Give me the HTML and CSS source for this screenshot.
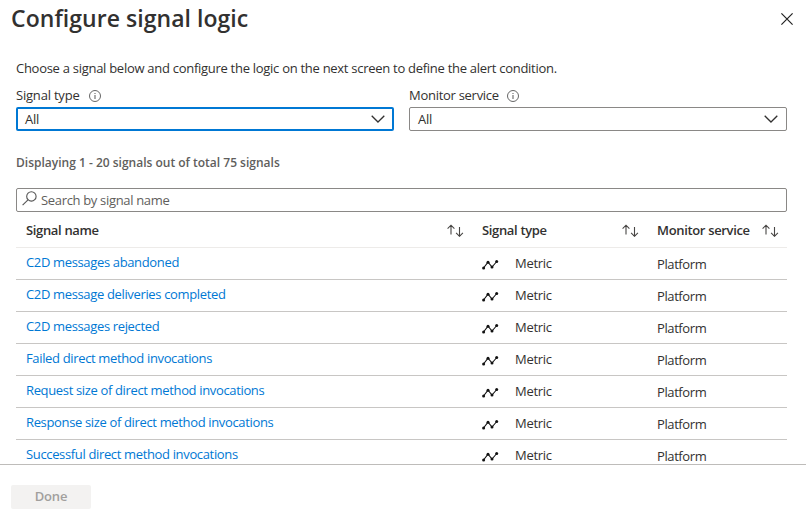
FILE: index.html
```html
<!DOCTYPE html>
<html lang="en">
<head>
<meta charset="utf-8">
<title>Configure signal logic</title>
<link rel="stylesheet" href="styles.css">
</head>
<body>
<svg class="symbols" width="0" height="0">
  <symbol id="info" viewBox="0 0 12 12"><circle cx="6" cy="6" r="5.5" fill="none" stroke="#666" stroke-width="1"/><path d="M6 5v4M6 2.9v1.2" stroke="#666" stroke-width="1.1"/></symbol>
  <symbol id="chevron" viewBox="0 0 14 8"><path d="M.7.7 7 7 13.3.7" fill="none" stroke="#323130" stroke-width="1.3"/></symbol>
  <symbol id="sort" viewBox="0 0 17 13"><path d="M4 10.5V1.2M.6 4.6 4 1.2l3.4 3.4M12.5 3v9.3M9.1 8.9l3.4 3.4 3.4-3.4" fill="none" stroke="#484644" stroke-width="1.1"/></symbol>
  <symbol id="metric" viewBox="0 0 17 11"><path d="M1.5 9 6 3.2 10 8 14.8 2.5" fill="none" stroke="#111" stroke-width="1.1"/><g fill="#111"><circle cx="1.6" cy="9" r="1.5"/><circle cx="6" cy="3.2" r="1.5"/><circle cx="10" cy="8" r="1.5"/><circle cx="14.7" cy="2.6" r="1.5"/></g></symbol>
</svg>
<main class="content">
  <header class="title-bar">
    <h1><span>Configure signal logic</span></h1>
    <svg class="close" viewBox="0 0 12 12"><path d="M.4.4 11.6 11.6M11.6.4.4 11.6" stroke="#222" stroke-width="1.2"/></svg>
  </header>
  <div class="panel">
    <p class="intro">Choose a signal below and configure the logic on the next screen to define the alert condition.</p>
    <div class="filters">
      <div class="filter">
        <div class="label"><span class="label-type">Signal type</span><svg class="info"><use href="#info"/></svg></div>
        <div class="select focused"><span>All</span><svg class="chevron"><use href="#chevron"/></svg></div>
      </div>
      <div class="filter">
        <div class="label"><span class="label-service">Monitor service</span><svg class="info"><use href="#info"/></svg></div>
        <div class="select"><span>All</span><svg class="chevron"><use href="#chevron"/></svg></div>
      </div>
    </div>
    <p class="count">Displaying 1 - 20 signals out of total 75 signals</p>
    <div class="search">
      <svg class="magnifier" viewBox="0 0 15 15"><circle cx="9.4" cy="5.4" r="4.7" fill="none" stroke="#555" stroke-width="1.1"/><path d="M6 8.8.6 14.2" stroke="#555" stroke-width="1.1"/></svg>
      <span>Search by signal name</span>
    </div>
    <div class="table">
      <div class="row head">
        <div class="cell name"><span>Signal name</span><svg class="sort"><use href="#sort"/></svg></div>
        <div class="cell type"><span>Signal type</span><svg class="sort"><use href="#sort"/></svg></div>
        <div class="cell service"><span>Monitor service</span><svg class="sort"><use href="#sort"/></svg></div>
      </div>
      <div class="row"><div class="cell name"><a>C2D messages abandoned</a></div><div class="cell type"><svg class="metric"><use href="#metric"/></svg><span>Metric</span></div><div class="cell service"><span>Platform</span></div></div>
      <div class="row"><div class="cell name"><a>C2D message deliveries completed</a></div><div class="cell type"><svg class="metric"><use href="#metric"/></svg><span>Metric</span></div><div class="cell service"><span>Platform</span></div></div>
      <div class="row"><div class="cell name"><a>C2D messages rejected</a></div><div class="cell type"><svg class="metric"><use href="#metric"/></svg><span>Metric</span></div><div class="cell service"><span>Platform</span></div></div>
      <div class="row"><div class="cell name"><a>Failed direct method invocations</a></div><div class="cell type"><svg class="metric"><use href="#metric"/></svg><span>Metric</span></div><div class="cell service"><span>Platform</span></div></div>
      <div class="row"><div class="cell name"><a>Request size of direct method invocations</a></div><div class="cell type"><svg class="metric"><use href="#metric"/></svg><span>Metric</span></div><div class="cell service"><span>Platform</span></div></div>
      <div class="row"><div class="cell name"><a>Response size of direct method invocations</a></div><div class="cell type"><svg class="metric"><use href="#metric"/></svg><span>Metric</span></div><div class="cell service"><span>Platform</span></div></div>
      <div class="row"><div class="cell name"><a>Successful direct method invocations</a></div><div class="cell type"><svg class="metric"><use href="#metric"/></svg><span>Metric</span></div><div class="cell service"><span>Platform</span></div></div>
    </div>
  </div>
</main>
<footer class="footer"><button class="done" disabled>Done</button></footer>
</body>
</html>
```
FILE: styles.css
```css
* { box-sizing: border-box; }
html, body { margin: 0; height: 521px; overflow: hidden; }
body {
  display: flex;
  flex-direction: column;
  background: #fff;
  color: #323130;
  font: 13px/18px "Open Sans", "Noto Sans", sans-serif;
  letter-spacing: -0.28px;
  white-space: nowrap;
}
svg { display: block; flex: none; }
.symbols { display: none; }
h1, p { margin: 0; }
.content { height: 464px; overflow: hidden; }
.title-bar {
  display: flex;
  justify-content: space-between;
  align-items: center;
  height: 38px;
  padding: 0 13px 0 11px;
}
h1 { margin-top: -2px; font-size: 23px; line-height: 38px; font-weight: 600; letter-spacing: 0.05px; }
.close { width: 12px; height: 12px; }
.panel { padding: 21px 19px 0 16px; }
.filters { display: grid; grid-template-columns: 378px 378px; gap: 15px; margin-top: 9px; }
.label { display: flex; align-items: center; height: 18px; }
.label-type { width: 64px; letter-spacing: -0.2px; }
.label-service { width: 89px; }
.info { width: 12px; height: 12px; margin: 1px 0 0 9px; }
.select {
  display: flex;
  align-items: center;
  justify-content: space-between;
  height: 24px;
  margin-top: 3px;
  padding: 0 8px;
  border: 1px solid #8a8886;
  border-radius: 2px;
}
.select.focused { border: 2px solid #0078d4; padding: 0 7px; }
.chevron { width: 14px; height: 8px; }
.count { margin-top: 23px; font-weight: 600; font-size: 12px; letter-spacing: 0; color: #605e5c; }
.search {
  display: flex;
  align-items: center;
  height: 24px;
  margin-top: 16px;
  padding-left: 5px;
  border: 1px solid #8a8886;
  border-radius: 2px;
  color: #605e5c;
  letter-spacing: -0.33px;
}
.magnifier { width: 15px; height: 15px; margin: -3px 4px 0 0; }
.row {
  display: grid;
  grid-template-columns: 456px 175px 140px;
  height: 32px;
  border-bottom: 1px solid #c8c6c4;
}
.row.head { height: 36px; border-color: #edebe9; font-weight: 600; letter-spacing: -0.34px; }
.cell { display: flex; align-items: center; padding: 0 10px; }
.cell.service { letter-spacing: -0.4px; }
.head .cell.service { letter-spacing: -0.34px; }
.name a { color: #0078d4; padding-bottom: 4px; letter-spacing: -0.35px; }
.type span { padding-bottom: 2px; }
.head .cell { justify-content: space-between; padding-top: 1px; }
.head .type span { padding-bottom: 0; }
.sort { width: 17px; height: 13px; margin-right: -2px; }
.metric { width: 17px; height: 11px; margin: 1px 16px 0 0; }
.footer { height: 57px; border-top: 1px solid #bebcba; padding: 20px 11px; }
.done {
  display: block;
  width: 80px;
  height: 24px;
  border: 0;
  border-radius: 2px;
  background: #f3f2f1;
  color: #a19f9d;
  font: 600 13px/20px "Open Sans", "Noto Sans", sans-serif;
  letter-spacing: -0.2px;
  padding: 0 6px 2px;
}
```
